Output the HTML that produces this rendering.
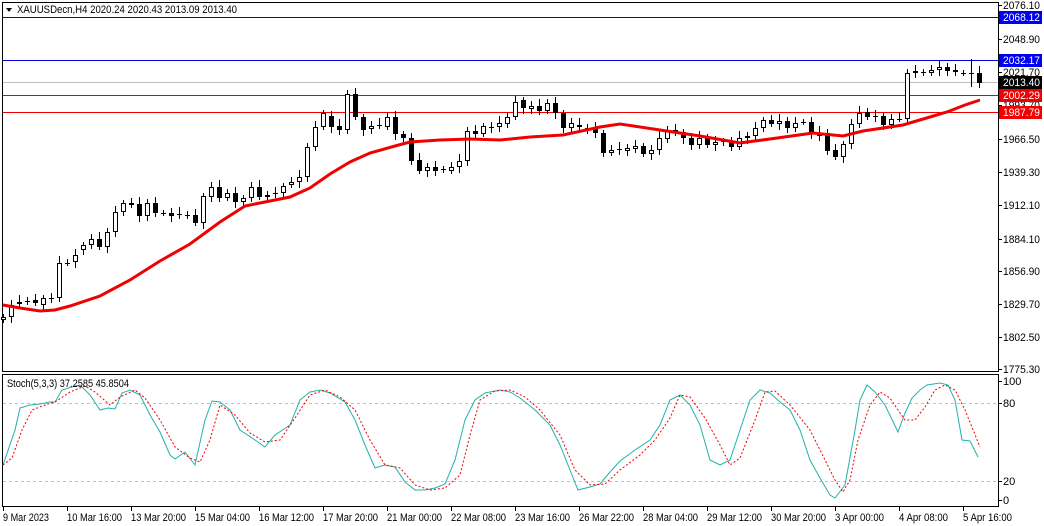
<!DOCTYPE html>
<html><head><meta charset="utf-8"><style>
html,body{margin:0;padding:0;background:#fff;width:1044px;height:526px;overflow:hidden}
svg{display:block;font-family:"Liberation Sans",Tahoma,sans-serif;font-size:11px}
</style></head><body>
<svg id="s" width="1044" height="526" xmlns="http://www.w3.org/2000/svg" shape-rendering="crispEdges">
<rect width="1044" height="526" fill="#fff"/>
<rect x="2.5" y="2.5" width="996" height="369" fill="none" stroke="#000"/>
<rect x="2.5" y="374.5" width="996" height="132" fill="none" stroke="#000"/>
<line x1="3" x2="998" y1="17.5" y2="17.5" stroke="#0000e0"/>
<line x1="3" x2="998" y1="60.5" y2="60.5" stroke="#0000e0"/>
<line x1="3" x2="998" y1="82.5" y2="82.5" stroke="#c0c0c0"/>
<line x1="3" x2="998" y1="95.5" y2="95.5" stroke="#f00000"/>
<line x1="3" x2="998" y1="112.5" y2="112.5" stroke="#f00000"/>
<line x1="3" x2="998" y1="403.5" y2="403.5" stroke="#c0c0c0" stroke-dasharray="3,3"/>
<line x1="3" x2="998" y1="481.5" y2="481.5" stroke="#c0c0c0" stroke-dasharray="3,3"/>
<g id="candles"></g>
<polyline id="ma" fill="none" stroke="#f00000" stroke-width="3" shape-rendering="auto"/>
<polyline id="st1" fill="none" stroke="#20b2aa" stroke-width="1" shape-rendering="auto"/>
<polyline id="st2" fill="none" stroke="#f00000" stroke-width="1" stroke-dasharray="2,2" shape-rendering="auto"/>
<path d="M6 8 L12 8 L9 12 Z" fill="#000"/>
<text x="17" y="13" textLength="220" lengthAdjust="spacingAndGlyphs">XAUUSDecn,H4  2020.24 2020.43 2013.09 2013.40</text>
<text x="7" y="387" textLength="122" lengthAdjust="spacingAndGlyphs">Stoch(5,3,3) 37.2585 45.8504</text>
<g id="axis"></g>
<rect x="999" y="11" width="43" height="13" fill="#0000f0"/><text x="1003" y="21" fill="#fff" textLength="37" lengthAdjust="spacingAndGlyphs">2068.12</text>
<rect x="999" y="54" width="43" height="13" fill="#0000f0"/><text x="1003" y="64" fill="#fff" textLength="37" lengthAdjust="spacingAndGlyphs">2032.17</text>
<rect x="999" y="76" width="43" height="13" fill="#000"/><text x="1003" y="86" fill="#fff" textLength="37" lengthAdjust="spacingAndGlyphs">2013.40</text>
<rect x="999" y="89" width="43" height="13" fill="#f00000"/><text x="1003" y="99" fill="#fff" textLength="37" lengthAdjust="spacingAndGlyphs">2002.29</text>
<rect x="999" y="106" width="43" height="13" fill="#f00000"/><text x="1003" y="116" fill="#fff" textLength="37" lengthAdjust="spacingAndGlyphs">1987.79</text>
<g id="taxis"></g>
</svg>
<script>
var NS="http://www.w3.org/2000/svg";
function el(t,a,p){var e=document.createElementNS(NS,t);for(var k in a)e.setAttribute(k,a[k]);(p||document.getElementById('s')).appendChild(e);return e;}
var C=[[317,320,'w'],[305,317,'w'],[302,304,'w'],[301,301,'c'],[300,303,'b'],[298,305,'w'],[298,298,'c'],[263,298,'w'],[263,263,'c'],[255,262,'w'],
[245,250,'w'],[239,245,'w'],[239,247,'b'],[232,247,'w'],[212,232,'w'],[203,212,'w'],[203,205,'b'],[204,216,'b'],[203,216,'w'],[203,213,'b'],
[213,213,'c'],[213,216,'b'],[214,214,'c'],[215,215,'c'],[215,223,'b'],[196,223,'w'],[187,197,'w'],[187,198,'b'],[193,198,'w'],[193,202,'b'],
[198,202,'w'],[187,198,'w'],[187,197,'b'],[195,197,'w'],[193,193,'c'],[186,193,'w'],[182,185,'w'],[177,182,'w'],[147,177,'w'],[127,147,'w'],
[113,127,'w'],[116,127,'b'],[126,130,'b'],[94,130,'w'],[94,117,'b'],[117,130,'b'],[126,129,'w'],[125,125,'c'],[117,127,'w'],[117,134,'b'],
[134,138,'b'],[138,161,'b'],[160,171,'b'],[167,171,'w'],[167,171,'b'],[169,169,'c'],[167,171,'w'],[161,167,'w'],[131,161,'w'],[131,134,'b'],
[126,134,'w'],[127,127,'c'],[123,127,'w'],[117,124,'w'],[102,117,'w'],[100,108,'b'],[106,109,'w'],[106,111,'b'],[103,111,'w'],[103,113,'b'],
[113,128,'b'],[123,128,'w'],[125,127,'b'],[128,128,'c'],[128,133,'b'],[133,153,'b'],[150,153,'w'],[149,149,'c'],[148,151,'w'],[146,149,'w'],
[146,154,'b'],[150,154,'w'],[138,150,'w'],[130,139,'w'],[130,133,'b'],[132,138,'b'],[138,145,'b'],[138,145,'w'],[138,145,'b'],[142,145,'w'],
[141,141,'c'],[142,147,'b'],[138,147,'w'],[136,138,'w'],[128,136,'w'],[120,128,'w'],[120,124,'b'],[121,124,'w'],[121,128,'b'],[123,128,'w'],
[122,122,'c'],[122,133,'b'],[133,136,'b'],[133,151,'b'],[150,157,'b'],[144,157,'w'],[124,144,'w'],[113,124,'w'],[112,117,'b'],[116,116,'c'],
[116,125,'b'],[119,125,'w'],[119,119,'c'],[73,119,'w'],[71,73,'w'],[72,72,'c'],[70,73,'w'],[67,70,'w'],[67,71,'b'],[70,72,'b'],
[73,73,'c'],[73,74,'b'],[73,83,'b']];
var g=document.getElementById('candles');
C.forEach(function(c,i){var x=3+8*i;var t=c[0],b=c[1];
 var wt=t-3-(i*7%5),wb=b+3+(i*3%4);
 if(i==121){wt=59;wb=87;}
 el('line',{x1:x+.5,x2:x+.5,y1:wt,y2:wb,stroke:'#000'},g);
 if(c[2]=='c'){el('line',{x1:x-2,x2:x+3,y1:t+.5,y2:t+.5,stroke:'#000'},g);}
 else if(c[2]=='b'){el('rect',{x:x-2,y:t,width:5,height:Math.max(1,b-t),fill:'#000'},g);}
 else{el('rect',{x:x-1.5,y:t+.5,width:4,height:Math.max(1,b-t-1),fill:'#fff',stroke:'#000'},g);}
});
document.getElementById('ma').setAttribute('points',"3,305 20,308 40,311 55,310 70,306 100,296 130,280 160,261 190,244 220,222 245,206 270,201 290,197 310,188 330,174 350,162 370,153 395,146 410,142 440,140 470,139 500,140 530,137 563,135 600,127 620,124 660,130 700,136 740,143 770,139 813,133 843,136 863,131 903,125 930,117 947,112 965,105 980,100");
document.getElementById('st1').setAttribute('points',"3,465 15,430 20,408 30,405 40,404 50,402 55,402 62,390 75,386 80,385 90,395 100,410 108,408 115,409 122,393 130,390 140,395 150,415 160,432 170,455 175,459 185,452 195,465 205,420 212,401 220,402 230,410 240,430 255,440 265,447 275,435 290,425 300,400 310,392 320,390 330,393 345,402 355,420 365,445 375,468 385,465 395,467 405,482 415,490 425,490 435,488 445,484 455,460 465,420 475,400 485,393 500,390 510,392 520,398 535,410 550,425 560,445 570,470 578,490 590,487 600,484 610,472 620,461 635,450 650,440 660,425 670,400 680,395 690,405 700,425 710,460 720,465 730,460 740,430 750,400 760,390 770,393 780,402 790,410 800,430 810,460 820,478 830,495 835,498 845,485 855,430 860,400 867,385 875,392 885,405 898,432 905,413 912,398 920,390 927,385 940,383 948,385 955,400 962,440 970,441 978,457");
document.getElementById('st2').setAttribute('points',"3,465 12,458 22,430 32,410 45,405 55,402 70,392 85,386 95,392 110,405 120,397 135,390 145,398 160,420 175,447 190,458 200,462 210,440 220,405 235,415 250,433 265,442 280,440 295,418 310,395 325,390 340,397 355,410 370,440 385,465 400,468 415,485 430,490 445,488 460,475 470,435 480,400 495,391 510,390 525,397 540,410 560,435 575,470 590,485 605,484 620,470 640,455 655,440 670,418 680,395 690,397 705,418 720,445 730,465 740,458 755,420 765,392 775,391 790,405 810,430 825,460 835,480 843,492 850,480 858,440 870,405 880,392 890,398 898,410 905,420 915,420 925,407 935,390 945,385 955,390 965,410 980,447");
var ax=document.getElementById('axis');
[["2076.10",5],["2048.90",39],["2021.70",72],["1993.70",105],["1966.50",139],["1939.30",172],["1912.10",205],["1884.10",239],["1856.90",271],["1829.70",304],["1802.50",337],["1775.30",369],["100",381],["80",403],["20",481],["0",500]].forEach(function(a){
 el('line',{x1:999,x2:1002,y1:a[1]+.5,y2:a[1]+.5,stroke:'#000'},ax);
 var o={x:1003,y:a[1]+4}; if(a[0].length==7){o.textLength=37;o.lengthAdjust='spacingAndGlyphs';}
 el('text',o,ax).textContent=a[0];});
var ta=document.getElementById('taxis');
["9 Mar 2023","10 Mar 16:00","13 Mar 20:00","15 Mar 04:00","16 Mar 12:00","17 Mar 20:00","21 Mar 00:00","22 Mar 08:00","23 Mar 16:00","26 Mar 22:00","28 Mar 04:00","29 Mar 12:00","30 Mar 20:00","3 Apr 00:00","4 Apr 08:00","5 Apr 16:00"].forEach(function(t,i){
 var x=3+64*i; el('line',{x1:x+.5,x2:x+.5,y1:507,y2:511,stroke:'#000'},ta);
 var w=t.length==12?55:(t.length==11?(i==0?0:49):46); if(i==0)w=46;
 el('text',{x:x,y:521,textLength:w,lengthAdjust:'spacingAndGlyphs'},ta).textContent=t;});
</script>
</body></html>
